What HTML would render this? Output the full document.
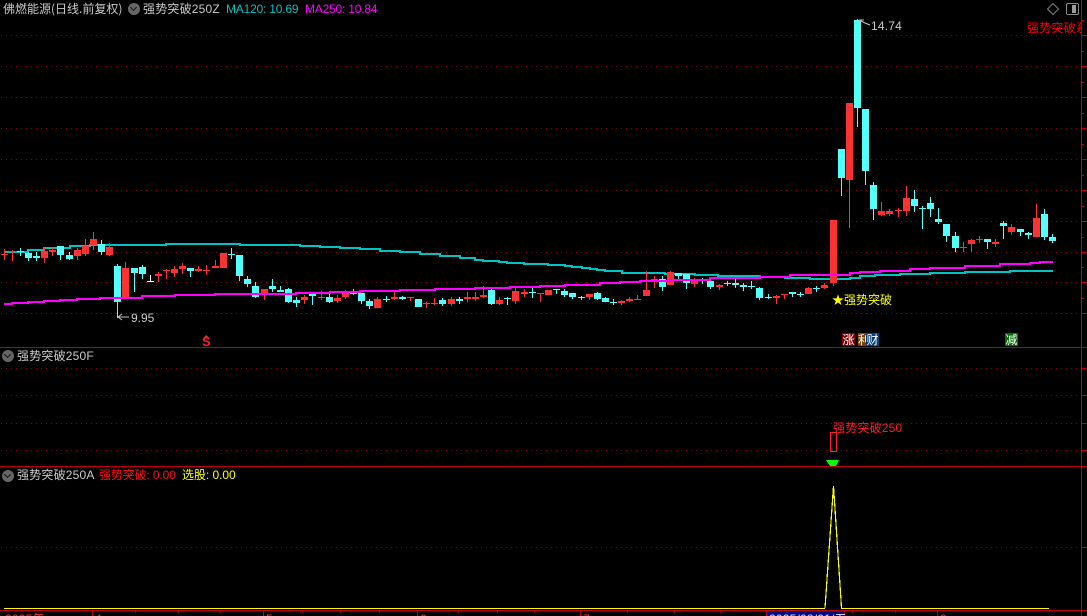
<!DOCTYPE html>
<html>
<head>
<meta charset="utf-8">
<title>强势突破250</title>
<style>
html,body{margin:0;padding:0;background:#000;width:1087px;height:616px;overflow:hidden}
#w{position:relative;width:1087px;height:616px;overflow:hidden;background:#000}
svg{position:absolute;left:0;top:0}
.t{position:absolute;white-space:pre;font:12px/14px "Liberation Sans","WenQuanYi Zen Hei","Noto Sans CJK SC",sans-serif;color:#c8c8c8;letter-spacing:.2px}
.b{position:absolute;top:333px;height:13px;font:12px/13px "WenQuanYi Zen Hei","Noto Sans CJK SC",sans-serif;color:#fff;text-align:center;overflow:hidden}
.ic{position:absolute;width:12px;height:12px;border-radius:50%;background:#666}
.ic:after{content:"";position:absolute;left:3px;top:2px;width:4px;height:4px;border-right:1.5px solid #111;border-bottom:1.5px solid #111;transform:rotate(45deg)}
</style>
</head>
<body>
<div id="w">
<svg id="s" width="1087" height="616" viewBox="0 0 1087 616" shape-rendering="crispEdges">
<g id="grid" stroke="#960000" stroke-width="1" stroke-dasharray="1 4" fill="none">
<path d="M1 35.5H1081M1 66.5H1081M1 97.5H1081M1 128.5H1081M1 159.5H1081M1 190.5H1081M1 221.5H1081M1 252.5H1081M1 282.5H1081M1 313.5H1081M1 368.5H1081M1 395.5H1081M1 423.5H1081M1 450.5H1081M1 547.5H1081"/>
</g>
<g stroke="#c00000" fill="none">
<path d="M0 347.5H1087M0 466.5H1087M0 610.5H1087"/>
<path d="M1081.5 0V616"/>
<path d="M1081 35.5H1087M1081 66.5H1087M1081 97.5H1087M1081 128.5H1087M1081 159.5H1087M1081 190.5H1087M1081 221.5H1087M1081 252.5H1087M1081 282.5H1087M1081 313.5H1087M1081 368.5H1087M1081 395.5H1087M1081 423.5H1087M1081 450.5H1087M1081 547.5H1087"/>
<path d="M1081 20.5H1084M1081 51.5H1084M1081 82.5H1084M1081 113.5H1084M1081 144.5H1084M1081 175.5H1084M1081 206.5H1084M1081 237.5H1084M1081 267.5H1084M1081 298.5H1084"/>
<path d="M92.5 610V616M263.5 610V616M417.5 610V616M580.5 610V616M937.5 610V616M135.5 610V613M178.5 610V613M220.5 610V613M302.5 610V613M340.5 610V613M379.5 610V613M458.5 610V613M497.5 610V613M534.5 610V613M627.5 610V613M674.5 610V613M720.5 610V613M852.5 610V613M895.5 610V613"/>
</g>
<path fill="none" stroke="#00c4c4" stroke-width="2" d="M4 252H28V250H44V248H70V246H90V245H166V244H240V245H300V246H320V247H340V248H360V249H380V251H400V252H420V254H440V256H460V258H475V260H483V261H499V262H507V263H524V264H548V265H565V266H572V267H582V268H590V269H597V270H605V271H622V273H655V273H665V274H695V275H718V276H760V277H785V278H810V279H850V278H860V276H875V275H900V274H930V273H965V272H1010V271H1053"/>
<g id="c"></g>
<path fill="none" stroke="#ff00ff" stroke-width="2" d="M4 304H12V303H28V302H44V301H60V300H77V299H100V298H142V296H175V295H215V294H296V293H330V292H360V291H400V290H435V289H475V288H510V287H540V286H565V285H600V283H620V282H640V281H670V280H710V278H760V277H790V275H850V273H860V272H880V271H910V269H930V268H965V266H1000V264H1030V263H1040V262H1053"/>
<rect x="4" y="608" width="821" height="1" fill="#ffff00"/>
<rect x="841" y="608" width="208" height="1" fill="#ffff00"/>
<polyline fill="none" stroke="#ffff00" stroke-width="1.2" points="825,608 833.5,486 841.5,608"/>
<rect x="830.5" y="432.5" width="6" height="19" fill="none" stroke="#ff2020"/>
<polygon points="826,460 839,460 836,466 830,466" fill="#00ff00"/>
<path d="M118 317H129M118 317L122 314M118 317L122 320" stroke="#c0c0c0" fill="none" shape-rendering="auto"/>
<path d="M859 20L865 23L870 25M859 20L864 20M859 20L861 24" stroke="#c0c0c0" fill="none" shape-rendering="auto"/>
<polygon points="1053,3.5 1058.5,9 1053,14.5 1047.5,9" fill="none" stroke="#808080" shape-rendering="auto"/>
<rect x="1066.5" y="3.5" width="12" height="11" rx="1.5" fill="none" stroke="#888"/>
<rect x="1072" y="5" width="4" height="8" fill="#999"/>
<polygon points="206,335 209,338 203,338" fill="#ff2020"/>
<rect x="767" y="611" width="77" height="5" fill="#000080"/>
<path d="M766.5 610V616M844.5 610V616" stroke="#c00000"/>
</svg>

<div class="t" style="left:3px;top:2px;font-family:'WenQuanYi Zen Hei','Noto Sans CJK SC',sans-serif;letter-spacing:0">佛燃能源(日线.前复权)</div>
<div class="ic" style="left:128px;top:3px"></div>
<div class="t" style="left:143px;top:2px">强势突破250Z</div>
<div class="t" style="left:226px;top:2px;color:#00c0c0;letter-spacing:-.2px">MA120: 10.69</div>
<div class="t" style="left:305px;top:2px;color:#ff00ff;letter-spacing:-.2px">MA250: 10.84</div>
<div style="position:absolute;left:1027px;top:21px;width:54px;height:14px;overflow:hidden"><span class="t" style="left:0;top:0;color:#ff0000">强势突破系统</span></div>
<div class="t" style="left:871px;top:19px;letter-spacing:.2px">14.74</div>
<div class="t" style="left:131px;top:311px;letter-spacing:0">9.95</div>
<div class="t" style="left:832px;top:293px;color:#ffff00;letter-spacing:0">★强势突破</div>
<div class="t" style="left:202px;top:335px;color:#ff2020;font-weight:bold;font-size:13px;line-height:13px">S</div>
<div class="b" style="left:842px;width:13px;background:#800000">涨</div>
<div class="b" style="left:858px;width:8px;background:#804000;text-align:left">利</div>
<div class="b" style="left:866px;width:13px;background:#004080">财</div>
<div class="b" style="left:1005px;width:13px;background:#007000">减</div>
<div class="ic" style="left:2px;top:350px"></div>
<div class="t" style="left:17px;top:349px">强势突破250F</div>
<div class="t" style="left:833px;top:421px;color:#ff2020">强势突破250</div>
<div class="ic" style="left:2px;top:470px"></div>
<div class="t" style="left:17px;top:468px">强势突破250A</div>
<div class="t" style="left:99px;top:468px;color:#ff1010;letter-spacing:-.13px">强势突破: 0.00</div>
<div class="t" style="left:182px;top:468px;color:#ffff00;letter-spacing:-.05px">选股: 0.00</div>
<div class="t" style="left:5px;top:612px;color:#ff3232">2025年</div>
<div class="t" style="left:95px;top:612px;color:#ff3232">4</div>
<div class="t" style="left:266px;top:612px;color:#ff3232">5</div>
<div class="t" style="left:420px;top:612px;color:#ff3232">6</div>
<div class="t" style="left:583px;top:612px;color:#ff3232">7</div>
<div class="t" style="left:769px;top:612px;color:#e0e0ff">2025/08/01/五</div>
<div class="t" style="left:940px;top:612px;color:#ff3232">9</div>
</div>
<script>
var d=[[4,0,249,254,255,260],[12,0,250,251,252,261],[20,1,248,251,252,256],[28,1,252,253,258,261],[36,1,252,256,258,261],[44,0,248,251,258,263],[52,0,247,250,252,256],[60,1,246,246,255,260],[69,1,252,255,259,260],[77,0,248,250,256,260],[85,0,239,246,254,256],[93,0,232,239,245,250],[101,1,240,244,252,255],[109,0,243,247,255,256],[117,1,264,266,302,318],[125,0,262,268,299,299],[134,1,268,268,273,292],[142,1,265,267,274,279],[150,2,275,281,282,282],[158,0,272,274,276,282],[166,0,269,270,271,279],[174,0,266,269,273,277],[182,0,263,266,269,274],[190,1,268,268,271,277],[198,0,266,269,271,272],[206,0,265,270,271,275],[215,0,260,266,268,268],[223,0,253,253,268,268],[231,1,248,254,255,259],[239,1,255,255,276,281],[247,1,276,279,284,287],[255,1,282,286,297,298],[264,0,289,289,295,300],[272,1,279,286,289,292],[280,1,286,290,292,292],[288,1,288,289,302,303],[296,1,297,300,303,307],[304,0,295,297,300,304],[312,1,294,294,296,305],[321,0,291,297,298,300],[329,1,294,297,302,303],[337,0,295,298,301,303],[345,0,290,291,297,299],[353,1,289,291,294,295],[361,1,293,293,301,304],[369,1,299,301,306,309],[377,0,297,299,308,308],[386,1,296,299,300,302],[394,0,292,297,299,300],[402,1,296,297,299,300],[410,0,297,297,298,301],[418,1,299,299,307,307],[426,0,302,303,304,308],[434,0,298,303,304,305],[442,1,298,300,304,306],[451,0,297,299,304,306],[459,1,297,299,301,304],[467,0,292,297,299,302],[475,0,292,297,299,301],[483,0,286,295,297,298],[491,1,289,290,304,305],[499,0,297,300,304,305],[507,1,297,298,299,305],[515,0,288,291,301,304],[524,0,289,292,294,297],[532,1,288,292,293,298],[540,0,293,293,294,302],[548,0,290,290,295,295],[556,1,289,289,290,294],[564,1,289,291,295,297],[572,1,293,293,297,299],[581,1,296,297,298,300],[589,0,294,294,297,300],[597,1,292,293,299,300],[605,1,297,298,302,302],[613,1,299,302,303,305],[621,0,300,301,303,305],[629,0,297,299,301,302],[637,0,295,299,300,300],[646,0,271,290,296,296],[654,0,276,279,282,288],[662,1,276,279,287,291],[670,0,271,272,285,285],[678,1,273,273,276,281],[686,1,274,274,283,289],[694,0,278,281,284,287],[702,1,278,279,280,284],[710,1,281,281,287,289],[719,0,284,285,287,290],[727,1,281,283,284,286],[735,1,279,283,285,288],[743,1,283,285,287,291],[751,1,281,286,287,289],[759,1,287,288,298,300],[768,1,294,297,298,299],[776,0,295,296,298,304],[784,0,294,294,295,299],[792,1,292,292,294,297],[800,1,292,294,295,297],[808,0,287,288,294,294],[816,1,286,288,289,292],[824,0,283,285,288,289],[833,0,220,220,283,286],[841,1,149,149,178,196],[849,0,103,103,180,228],[857,1,19,20,108,127],[865,1,109,109,171,185],[873,1,182,185,209,220],[881,0,202,211,215,216],[889,0,209,211,214,216],[898,0,208,210,211,217],[906,0,186,198,211,216],[914,1,190,199,206,212],[922,1,206,208,209,229],[930,1,197,203,209,217],[938,1,208,219,222,224],[946,1,224,224,236,242],[955,1,232,236,248,252],[963,0,242,247,248,252],[971,0,239,240,244,252],[979,0,236,239,240,243],[987,1,239,239,242,249],[995,0,239,242,244,247],[1003,1,221,223,226,239],[1011,0,224,227,232,235],[1020,1,229,229,232,236],[1028,1,232,233,235,239],[1036,0,204,218,237,237],[1044,1,209,214,237,240],[1052,1,234,237,241,243]];
var col=["#ff3232","#54ffff","#ffffff"],h="";
for(var i=0;i<d.length;i++){var r=d[i],f=col[r[1]];
h+='<rect x="'+r[0]+'" y="'+r[2]+'" width="1" height="'+(r[5]-r[2])+'" fill="'+f+'"/>';
h+='<rect x="'+(r[0]-3)+'" y="'+r[3]+'" width="7" height="'+(r[4]-r[3])+'" fill="'+f+'"/>';}
document.getElementById("c").innerHTML=h;
</script>
</body>
</html>
